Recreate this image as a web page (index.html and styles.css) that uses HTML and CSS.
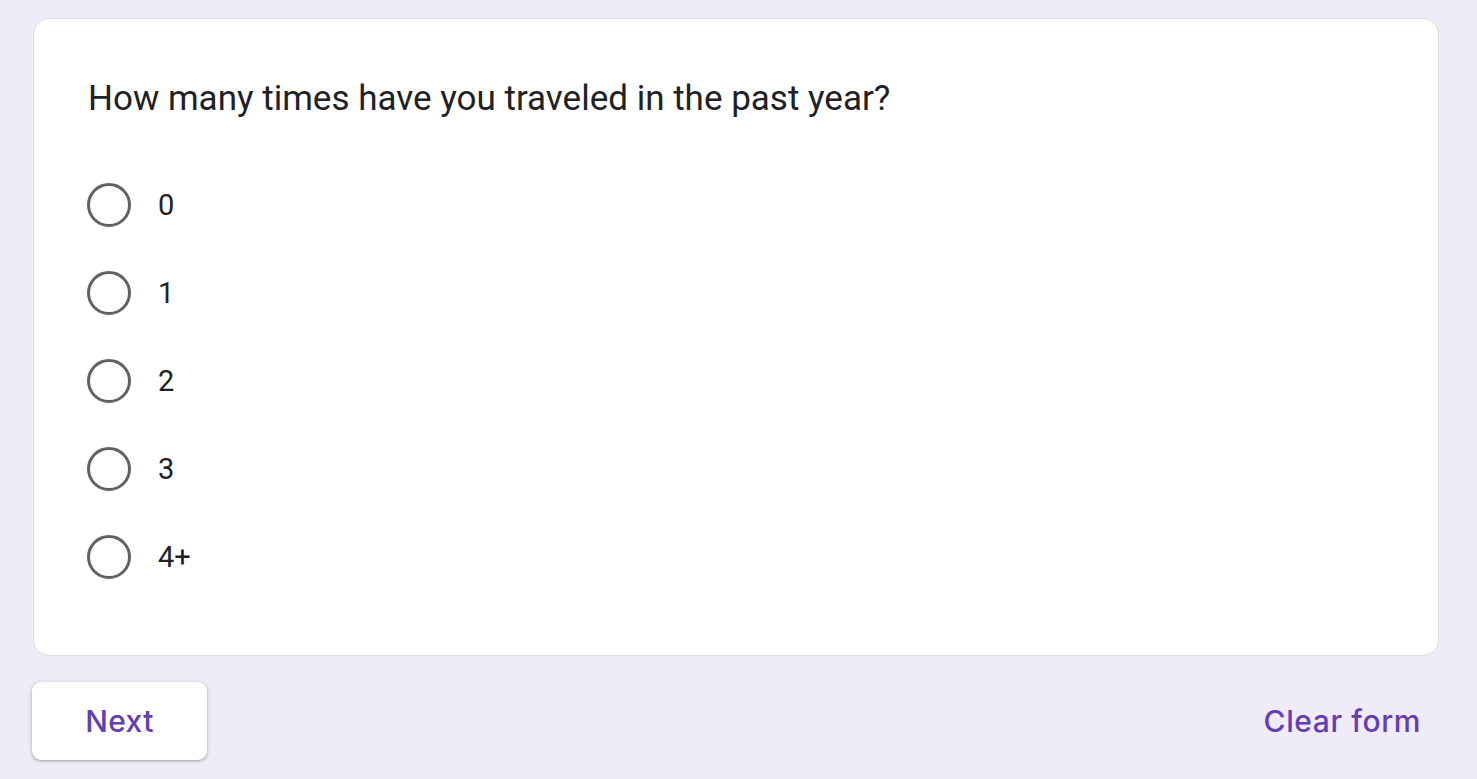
FILE: index.html
```html
<!DOCTYPE html>
<html>
<head>
<meta charset="utf-8">
<link rel="stylesheet" href="styles.css">
</head>
<body>
<div class="page">
  <div class="card">
    <div class="question">How many times have you traveled in the past year?</div>
    <div class="options">
      <label class="option"><span class="radio"></span><span class="label">0</span></label>
      <label class="option"><span class="radio"></span><span class="label">1</span></label>
      <label class="option"><span class="radio"></span><span class="label">2</span></label>
      <label class="option"><span class="radio"></span><span class="label">3</span></label>
      <label class="option"><span class="radio"></span><span class="label">4+</span></label>
    </div>
  </div>
  <div class="actions">
    <button class="next">Next</button>
    <button class="clear">Clear form</button>
  </div>
</div>
</body>
</html>
```
FILE: styles.css
```css
html, body {
  margin: 0;
  padding: 0;
  background: #f0ebf8;
  height: 100%;
}
body {
  font-family: Roboto, "Liberation Sans", sans-serif;
  color: #202124;
}
.page {
  padding: 18px 38px 0 33px;
}
.card {
  background: #fff;
  border: 1px solid #dadce0;
  border-radius: 16px;
  padding: 58px 54px 76px 54px;
}
.question {
  font-size: 35px;
  line-height: 44px;
}
.options {
  margin-top: 62px;
  display: flex;
  flex-direction: column;
  gap: 44px;
}
.option {
  display: flex;
  align-items: center;
  height: 44px;
}
.radio {
  width: 44px;
  height: 44px;
  box-sizing: border-box;
  border: 3.5px solid #5f6368;
  border-radius: 50%;
  flex: none;
  margin-left: -1px;
}
.label {
  margin-left: 27px;
  font-size: 29px;
}
.actions {
  display: flex;
  justify-content: space-between;
  align-items: center;
  margin-top: 26px;
}
.next, .clear {
  font-family: Inter, Roboto, sans-serif;
  font-weight: 500;
  font-size: 30px;
  letter-spacing: 0.3px;
  color: #643db4;
  border: none;
  cursor: pointer;
}
.next {
  width: 175px;
  height: 78px;
  background: #fff;
  border-radius: 9px;
  box-shadow: 0 1px 2px rgba(60,64,67,.3), 0 1px 4px 1px rgba(60,64,67,.15);
  margin-left: -1px;
}
.clear {
  background: transparent;
  padding: 0 18px 0 0;
  letter-spacing: 0.6px;
}
```
